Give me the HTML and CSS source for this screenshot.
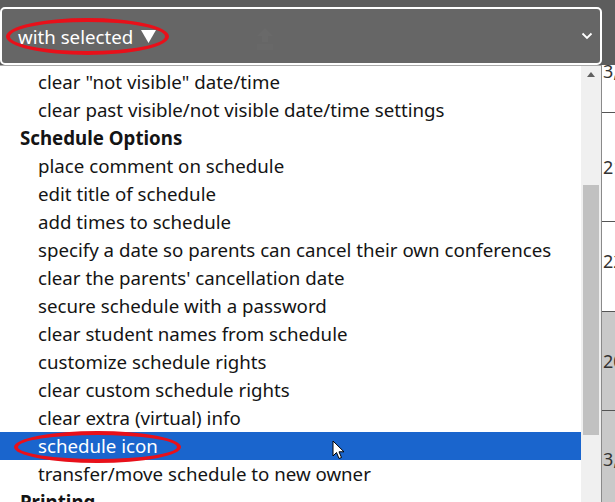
FILE: index.html
```html
<!DOCTYPE html>
<html>
<head>
<meta charset="utf-8">
<link rel="stylesheet" href="styles.css">
</head>
<body>
<div class="page">
  <div class="topbar">
    <div class="select">
      <span class="label">with selected</span>
      <svg class="tri" width="15" height="13" viewBox="0 0 15 13"><path d="M0 0 H15 L7.5 13 Z" fill="#fff"/></svg>
      <svg class="faded" width="24" height="26" viewBox="0 0 24 26"><path d="M12 2 L4 10 H9 V16 H15 V10 H20 Z" fill="#696969"/><rect x="4" y="18" width="16" height="6" fill="#686868"/></svg>
      <svg class="chev" width="12" height="8" viewBox="0 0 12 8"><path d="M1.5 1.5 L6 6 L10.5 1.5" fill="none" stroke="#fff" stroke-width="1.8"/></svg>
    </div>
    <span class="ann ann-top"></span>
  </div>
  <div class="main">
    <div class="dropdown">
      <ul class="options">
        <li>clear "not visible" date/time</li>
        <li>clear past visible/not visible date/time settings</li>
        <li class="group">Schedule Options</li>
        <li>place comment on schedule</li>
        <li>edit title of schedule</li>
        <li>add times to schedule</li>
        <li>specify a date so parents can cancel their own conferences</li>
        <li>clear the parents' cancellation date</li>
        <li>secure schedule with a password</li>
        <li>clear student names from schedule</li>
        <li>customize schedule rights</li>
        <li>clear custom schedule rights</li>
        <li>clear extra (virtual) info</li>
        <li class="sel">schedule icon</li>
        <li>transfer/move schedule to new owner</li>
        <li class="group">Printing</li>
      </ul>
      <div class="scrollbar">
        <span class="up"></span>
        <span class="thumb"></span>
      </div>
    </div>
    <div class="behind">
      <div class="cell c1">3,</div>
      <div class="cell c2">21</div>
      <div class="cell c3">22</div>
      <div class="cell c4 grey">20</div>
      <div class="cell c5 grey">3,</div>
    </div>
  </div>
  <span class="ann ann-sel"></span>
  <svg class="cursor" width="14" height="21" viewBox="0 0 14 21"><path d="M1 1 L1 16 L4.5 12.5 L7 18.5 L9.5 17.5 L7 11.8 L12 11.8 Z" fill="#fff" stroke="#000" stroke-width="1" stroke-linejoin="round"/></svg>
</div>
</body>
</html>
```
FILE: styles.css
```css
html, body {
  margin: 0;
  padding: 0;
}
body {
  width: 615px;
  height: 502px;
  overflow: hidden;
  background: #5d5d5d;
  font-family: "Noto Sans", "Open Sans", sans-serif;
}
.page {
  position: relative;
  width: 615px;
  height: 502px;
  overflow: hidden;
}
.topbar {
  position: relative;
  height: 65px;
  padding-top: 7px;
  box-sizing: border-box;
}
.select {
  width: 602px;
  height: 58px;
  box-sizing: border-box;
  border: 2px solid #fff;
  border-radius: 5px;
  background: #666;
  display: flex;
  align-items: center;
  padding-left: 16px;
  color: #fff;
  font-size: 18.7px;
}
.label {
  white-space: nowrap;
}
.tri {
  margin-left: 8px;
  margin-top: 1px;
}
.faded {
  margin-left: 97px;
  margin-top: 6px;
}
.chev {
  margin-left: auto;
  margin-right: 7px;
}
.ann {
  position: absolute;
  border: 4px solid #e8101a;
  border-radius: 50%;
  box-sizing: border-box;
}
.ann-top {
  left: 6px;
  top: 18px;
  width: 163px;
  height: 37px;
}
.ann-sel {
  left: 14px;
  top: 431px;
  width: 167px;
  height: 32px;
}
.main {
  display: flex;
  height: 437px;
}
.dropdown {
  display: flex;
  width: 602px;
  background: #fff;
  border-top: 1px solid #a9a9a9;
  border-right: 1px solid #8a8a8a;
  box-sizing: border-box;
}
.options {
  list-style: none;
  margin: 0;
  padding: 2px 0 0;
  width: 581px;
}
.options li {
  height: 28px;
  line-height: 28px;
  padding-left: 38px;
  white-space: nowrap;
  color: #141414;
  font-size: 18.7px;
}
.options li.group {
  padding-left: 20px;
  font-weight: bold;
}
.options li.sel {
  background: #1a65cd;
  color: #fff;
}
.scrollbar {
  width: 20px;
  background: #f0f0f0;
  display: flex;
  flex-direction: column;
  align-items: center;
}
.up {
  margin-top: 6px;
  width: 0;
  height: 0;
  border-left: 4px solid transparent;
  border-right: 4px solid transparent;
  border-bottom: 5px solid #606060;
}
.thumb {
  margin-top: 108px;
  width: 16px;
  height: 250px;
  background: #c1c1c1;
}
.behind {
  width: 13px;
  background: #fff;
  display: flex;
  flex-direction: column;
  font-size: 18px;
  color: #333;
  overflow: hidden;
}
.cell {
  border-bottom: 1px solid #555;
  display: flex;
  align-items: center;
  white-space: nowrap;
  padding-left: 1px;
}
.c1 { align-items: flex-start; margin-top: -6px; height: 53px; }
.c2 { height: 108px; }
.c3 { padding-bottom: 12px; box-sizing: border-box; height: 90px; }
.c4 { height: 98px; }
.c5 { flex: 1; align-items: flex-start; padding-top: 36px; border-bottom: 0; }
.grey { background: #c9c9c9; }
.cursor {
  position: absolute;
  left: 332px;
  top: 440px;
}
```
